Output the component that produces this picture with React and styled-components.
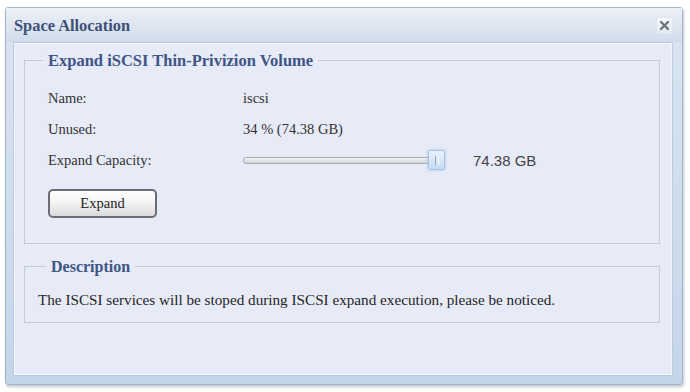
import React from "react";
import styled, { createGlobalStyle } from "styled-components";

const GlobalStyle = createGlobalStyle`
  html, body { margin: 0; padding: 0; background: #ffffff; }
  body { font-family: "Liberation Serif", "Times New Roman", serif; }
`;

const Page = styled.div`
  width: 690px;
  height: 392px;
  padding: 7px 0 0 5px;
  box-sizing: border-box;
  overflow: hidden;
`;

const Window = styled.div`
  width: 678px;
  height: 378px;
  box-sizing: border-box;
  border: 1px solid #a3b3c8;
  border-radius: 3px;
  background: linear-gradient(#dbe5f1, #c5d5e9);
  box-shadow: 1px 2px 3px rgba(120, 130, 150, 0.45);
  display: flex;
  flex-direction: column;
`;

const TitleBar = styled.div`
  height: 34px;
  flex: none;
  display: flex;
  align-items: center;
  justify-content: space-between;
  padding: 0 9px 0 8px;
  background: linear-gradient(#edf1f7, #d0dbea);
`;

const Title = styled.span`
  font-weight: bold;
  font-size: 16.4px;
  color: #3d5178;
  margin-top: 2px;
`;

const CloseButton = styled.button`
  width: 17px;
  height: 17px;
  padding: 0;
  border: 1px solid #dfe6ef;
  border-radius: 2px;
  background: linear-gradient(#f7f9fc, #e3e9f1);
  display: flex;
  align-items: center;
  justify-content: center;
  margin-top: 1px;
`;

const Content = styled.div`
  flex: 1;
  margin: 0 9px 8px 7px;
  background: #e7eaf7;
  border: 1px solid #b9cbe0;
  box-shadow: inset 0 0 0 1px #f2f5fb;
  padding: 8px 12px 0 10px;
  display: flex;
  flex-direction: column;
  gap: 13px;
`;

const Group = styled.fieldset`
  margin: 0;
  border: 1px solid #c6cbd8;
  padding: ${(p) => p.$pad};
  min-width: 0;
`;

const Legend = styled.legend`
  font-weight: bold;
  font-size: ${(p) => p.$size};
  line-height: 19px;
  color: #3e5685;
  padding: 0 5px;
  margin-left: ${(p) => p.$offset};
`;

const Grid = styled.div`
  display: grid;
  grid-template-columns: 195px 1fr;
  grid-auto-rows: 31px;
  align-items: center;
  font-size: 14.5px;
  color: #333;
`;

const SliderCell = styled.div`
  display: flex;
  align-items: center;
  gap: 35px;
`;

const Track = styled.div`
  position: relative;
  width: 193px;
  height: 5px;
  border: 1px solid #a8acb2;
  border-radius: 3px;
  background: linear-gradient(#f4f4f4, #cfd2d6);
`;

const Thumb = styled.div`
  position: absolute;
  right: -8px;
  top: -8px;
  width: 17px;
  height: 20px;
  box-sizing: border-box;
  border: 1px solid #a9c3e3;
  border-radius: 2px;
  background: linear-gradient(#eaf2fc, #c6dbf2);
  box-shadow: 0 0 3px rgba(150, 190, 235, 0.9);
  display: flex;
  justify-content: center;
  align-items: center;
  &::after {
    content: "";
    width: 2px;
    height: 9px;
    border-left: 1px solid #8aa4c6;
    border-right: 1px solid #fff;
  }
`;

const SizeText = styled.span`
  font-family: "Liberation Sans", Arial, sans-serif;
  font-size: 15px;
  color: #444;
`;

const Button = styled.button`
  display: block;
  margin-top: 13px;
  width: 109px;
  height: 29px;
  border: 2px solid #6a6d73;
  border-radius: 5px;
  background: linear-gradient(#ffffff, #f4f4f4 45%, #dadada);
  font-family: "Liberation Serif", serif;
  font-size: 14.5px;
  color: #222;
`;

const Description = styled.p`
  margin: 0;
  font-size: 15.2px;
  line-height: 17px;
  color: #262626;
`;

export default function App() {
  return (
    <>
      <GlobalStyle />
      <Page>
        <Window>
          <TitleBar>
            <Title>Space Allocation</Title>
            <CloseButton aria-label="close">
              <svg width="11" height="11" viewBox="0 0 11 11">
                <path d="M2 2 L9 9 M9 2 L2 9" stroke="#6b7380" strokeWidth="2.4" strokeLinecap="round" />
              </svg>
            </CloseButton>
          </TitleBar>
          <Content>
            <Group $pad="13px 12px 25px 23px">
              <Legend $size="16.5px" $offset="-5px">Expand iSCSI Thin-Privizion Volume</Legend>
              <Grid>
                <span>Name:</span>
                <span>iscsi</span>
                <span>Unused:</span>
                <span>34 % (74.38 GB)</span>
                <span>Expand Capacity:</span>
                <SliderCell>
                  <Track>
                    <Thumb />
                  </Track>
                  <SizeText>74.38 GB</SizeText>
                </SliderCell>
              </Grid>
              <Button>Expand</Button>
            </Group>
            <Group $pad="15px 12px 14px 13px">
              <Legend $size="16px" $offset="8px">Description</Legend>
              <Description>
                The ISCSI services will be stoped during ISCSI expand execution, please be noticed.
              </Description>
            </Group>
          </Content>
        </Window>
      </Page>
    </>
  );
}
